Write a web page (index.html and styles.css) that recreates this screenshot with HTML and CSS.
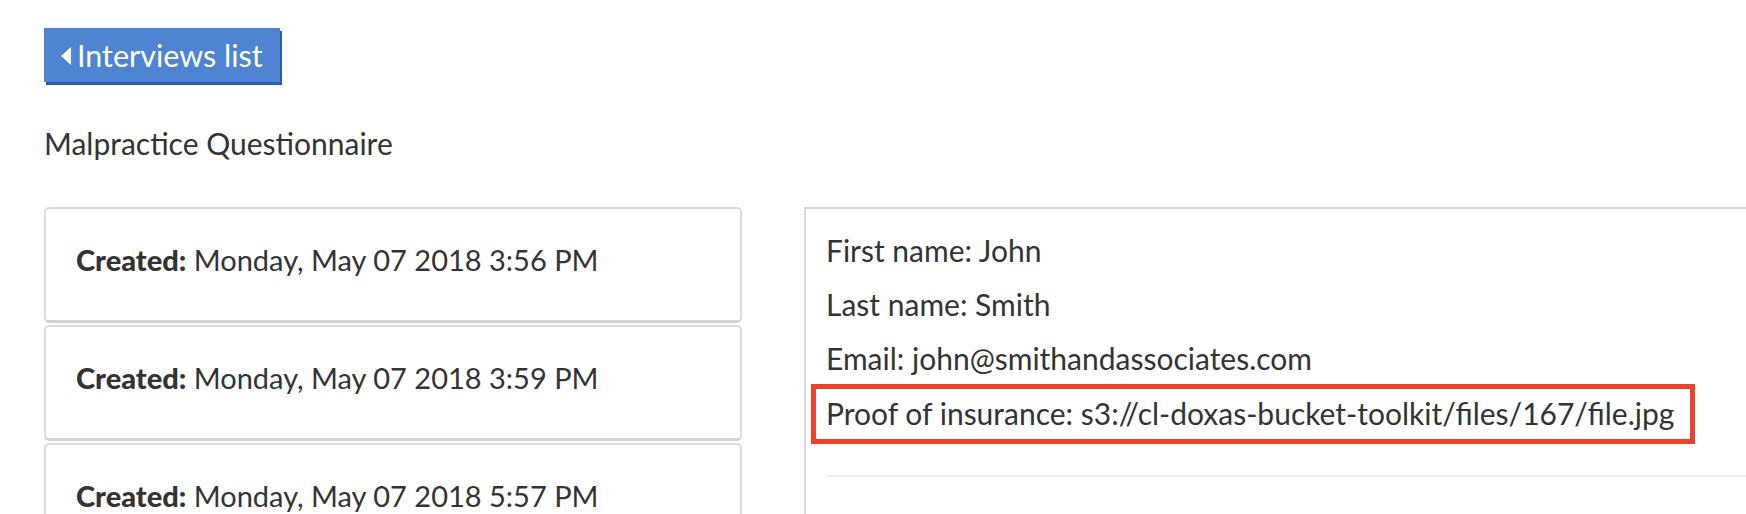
FILE: index.html
```html
<!DOCTYPE html>
<html lang="en">
<head>
  <meta charset="UTF-8" />
  <meta name="viewport" content="width=device-width, initial-scale=1.0"/>
  <title>Malpractice Questionnaire - Interviews</title>
  <link rel="stylesheet" href="styles.css">
</head>
<body>

<div class="page">
  <a class="back-btn" href="#"><span class="caret"></span>Interviews list</a>

  <p class="survey-title">Malpractice Questionnaire</p>

  <div class="interview-view">
    <!-- list of interviews -->
    <div class="interview-list">
      <div class="interview-item"><strong>Created:</strong> Monday, May 07 2018 3:56 PM</div>
      <div class="interview-item"><strong>Created:</strong> Monday, May 07 2018 3:59 PM</div>
      <div class="interview-item"><strong>Created:</strong> Monday, May 07 2018 5:57 PM</div>
    </div>

    <!-- answers of the selected interview -->
    <div class="answers-panel">
      <p class="answer">First name: John</p>
      <p class="answer">Last name: Smith</p>
      <p class="answer">Email: john@smithandassociates.com</p>
      <p class="answer highlighted">Proof of insurance: s3://cl-doxas-bucket-toolkit/files/167/file.jpg</p>
      <hr class="answers-end">
    </div>
  </div>
</div>

</body>
</html>
```

FILE: styles.css
```css
html, body {
  margin: 0;
  padding: 0;
  overflow: hidden;
  background: #fff;
  color: #333;
  font-family: "Lato", "Liberation Sans", sans-serif;
  font-size: 30px;
  line-height: 1.2;
}
.page {
  padding: 28px 0 0 44px;
}
.back-btn {
  display: inline-flex;
  align-items: center;
  height: 54px;
  padding: 0 17px 0 17px;
  background: #4e84d2;
  box-shadow: 2px 3px 0 #2d5fa6;
  color: #fff;
  text-decoration: none;
  font-size: 30.5px;
}
.caret {
  width: 0;
  height: 0;
  margin: 1px 6px 0 0;
  border-top: 9px solid transparent;
  border-bottom: 9px solid transparent;
  border-right: 10px solid #fff;
}
.survey-title {
  margin: 43px 0 46px;
}
.interview-view {
  display: grid;
  grid-template-columns: 698px 1100px;
  gap: 62px;
}
.interview-list {
  display: flex;
  flex-direction: column;
  gap: 2px;
}
.interview-item {
  padding: 33px 30px 42px;
  border: 2px solid #dcdcdc;
  border-bottom: 3px solid #d2d2d2;
  border-radius: 5px;
  font-size: 29px;
  line-height: 36px;
}
.interview-item strong {
  font-weight: 900;
}
.answers-panel {
  padding: 14px 0 0 20px;
  border-top: 2px solid #d8d8d8;
  border-left: 2px solid #d8d8d8;
}
.answer {
  margin: 0;
  line-height: 54px;
}
.answer.highlighted {
  display: inline-block;
  margin: -1px 0 0 -15px;
  padding: 0 16px 2px 10px;
  border: 5px solid #e8442c;
  line-height: 48px;
}
.answers-end {
  margin: 31px 0 0;
  border: 0;
  border-top: 2px solid #eee;
}
```
